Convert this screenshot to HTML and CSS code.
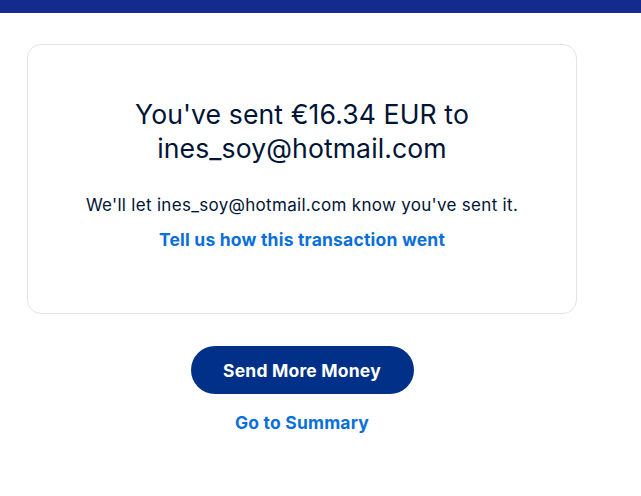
FILE: index.html
```html
<!DOCTYPE html>
<html lang="en">
<head>
<meta charset="utf-8">
<title>Sent</title>
<link rel="stylesheet" href="styles.css">
</head>
<body>
<div class="topbar"></div>
<main class="main">
  <section class="card">
    <h1 class="title">You've sent €16.34 EUR to<br>ines_soy@hotmail.com</h1>
    <p class="note">We'll let ines_soy@hotmail.com know you've sent it.</p>
    <a class="link" href="#">Tell us how this transaction went</a>
  </section>
  <div class="actions">
    <button class="btn" type="button">Send More Money</button>
    <a class="link summary" href="#">Go to Summary</a>
  </div>
</main>
</body>
</html>
```
FILE: styles.css
```css
* { box-sizing: border-box; }
html, body { margin: 0; padding: 0; background: #fff; }
body {
  font-family: "Inter", "Liberation Sans", sans-serif;
  color: #001435;
}
.topbar {
  height: 13px;
  background: #142a8c;
}
.main {
  padding: 31px 0 0 27px;
  width: 577px;
}
.card {
  width: 550px;
  height: 270px;
  border: 1px solid #e3e3e3;
  border-radius: 14px;
  display: flex;
  flex-direction: column;
  align-items: center;
  text-align: center;
  padding-top: 52px;
}
.title {
  margin: 0;
  font-weight: 400;
  font-size: 26.6px;
  line-height: 34px;
  letter-spacing: 0.1px;
  color: #001435;
}
.note {
  margin: 28px 0 0;
  font-size: 17px;
  letter-spacing: 0.3px;
  line-height: 24px;
  color: #001435;
}
.link {
  color: #0a6fd9;
  font-weight: 700;
  font-size: 17.5px;
  letter-spacing: 0.2px;
  text-decoration: none;
  line-height: 24px;
  margin-top: 11px;
}
.actions {
  display: flex;
  flex-direction: column;
  align-items: center;
  padding-top: 32px;
}
.btn {
  width: 223px;
  height: 48px;
  border: none;
  border-radius: 24px;
  background: #003087;
  color: #fff;
  font-family: inherit;
  font-weight: 700;
  font-size: 17.5px;
  letter-spacing: 0.2px;
  cursor: pointer;
}
.summary {
  margin-top: 17px;
  font-size: 17.5px;
}
```
